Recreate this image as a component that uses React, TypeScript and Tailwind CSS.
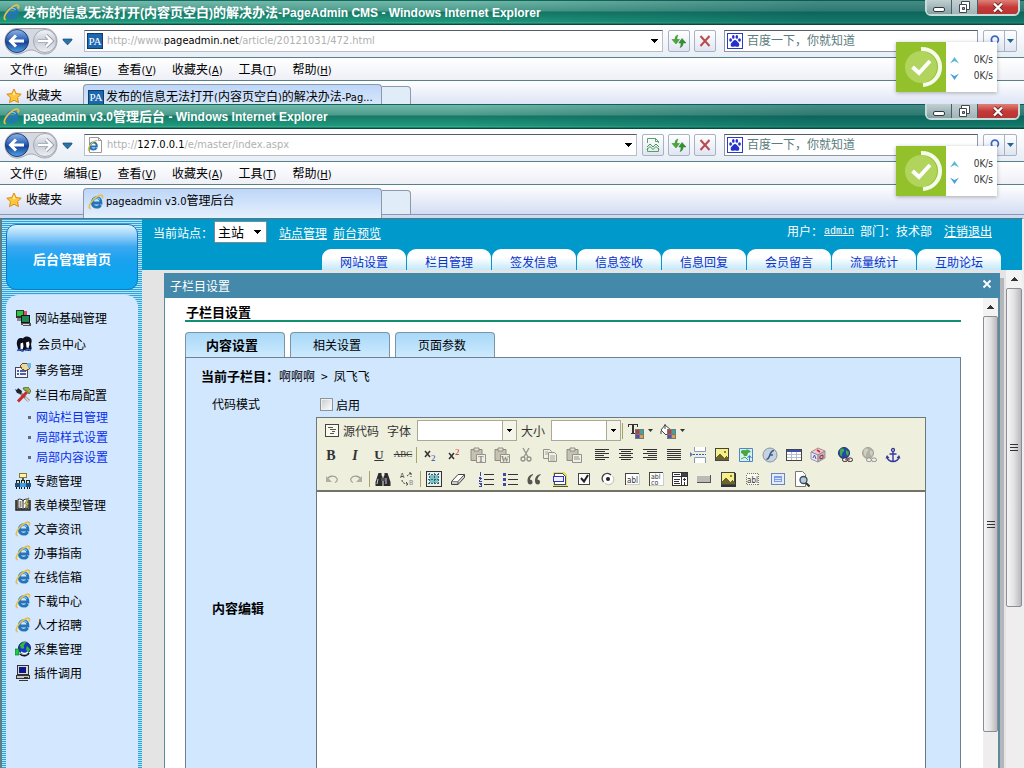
import type { ReactNode } from 'react';

const cjk = "font-['Noto_Sans_CJK_SC',sans-serif]";
const ui = "font-['DejaVu_Sans_Condensed','Noto_Sans_CJK_SC',sans-serif]";

// Chinese runs are set one size larger than the Latin text around them
function Mixed({ text, className }: { text: string; className: string }) {
  return (
    <>
      {text.split(/([\u4e00-\u9fff]+)/).map((part, i) =>
        i % 2 ? <span key={i} className={className}>{part}</span> : part
      )}
    </>
  );
}

function Icon({ children, size = 16, crisp = false }: { children: ReactNode; size?: number; crisp?: boolean }) {
  return (
    <svg width={size} height={size} viewBox="0 0 16 16" fill="none" shapeRendering={crisp ? 'crispEdges' : 'auto'} className="shrink-0" aria-hidden="true">
      {children}
    </svg>
  );
}

function IeIcon({ size = 16 }: { size?: number }) {
  return (
    <Icon size={size}>
      <path d="M4.600 9h8.400c.2-3.400-1.700-5.300-4.200-5.300-2.700 0-4.600 2.100-4.600 4.900s1.900 4.600 4.600 4.600c1.800 0 3.100-.8 3.800-2.200" stroke="#2474b8" strokeWidth="2.800" />
      <path d="M5 5.800c1.400-2.300 5-2.600 7-.3" stroke="#7cc8ee" strokeWidth="1.200" />
      <path d="M2.600 14.800C-.2 14 1.800 9.400 5 6 8.300 2.400 12.800.2 14.200 1.600c.6.600.4 1.800-.2 2.800" stroke="#e8bf4c" strokeWidth="1.600" />
    </Icon>
  );
}

function PaIcon() {
  return (
    <span className="flex size-4 shrink-0 items-center justify-center border border-[#123c6c] bg-[#1c68b0] font-['Liberation_Serif',serif] text-[11px] leading-none text-white">PA</span>
  );
}

function PageIcon() {
  return (
    <Icon>
      <path d="M2.500.5h9l3 3v12h-12z" fill="#fff" stroke="#999" />
      <path d="M11.500.5v3h3" stroke="#999" />
      <path d="M3 9.500h6.800c.1-2.500-1.200-3.900-3.200-3.900-2.100 0-3.400 1.500-3.400 3.600s1.300 3.400 3.400 3.400c1.400 0 2.300-.6 2.900-1.600" stroke="#2474b8" strokeWidth="2" />
      <path d="M1.800 14C.4 13 2 9 4.300 6.600 6.700 4.200 9.600 3 10.400 4" stroke="#e8bb3c" strokeWidth="1.200" />
    </Icon>
  );
}

function StarIcon() {
  return (
    <Icon>
      <path d="M8 1l2.200 4.600 5 .6-3.700 3.400 1 5L8 12.200 3.500 14.600l1-5L.8 6.200l5-.6z" fill="#ffc83a" stroke="#d98a18" />
      <path d="M8 3l1.200 3.300L8 7.500 6.800 6.300z" fill="#fff0a8" />
    </Icon>
  );
}

function PawIcon() {
  return (
    <Icon crisp>
      <rect x=".5" y=".5" width="15" height="15" fill="#fff" stroke="#2a3cc0" />
      <g fill="#2431cc" shapeRendering="auto">
        <ellipse cx="3.600" cy="7" rx="1.400" ry="1.800" />
        <ellipse cx="6.300" cy="3.900" rx="1.300" ry="1.900" />
        <ellipse cx="9.800" cy="3.900" rx="1.300" ry="1.900" />
        <ellipse cx="12.500" cy="7" rx="1.400" ry="1.800" />
        <path d="M8 7c1.600 0 2 1.600 3.400 2.800 1.500 1.300 1.200 4-.8 4-1 0-1.500-.3-2.600-.3s-1.600.3-2.600.3c-2 0-2.300-2.700-.8-4C6 8.600 6.400 7 8 7z" />
      </g>
    </Icon>
  );
}

function DownArrow({ className = 'text-black' }: { className?: string }) {
  return (
    <svg width="7" height="4" viewBox="0 0 7 4" shapeRendering="crispEdges" className={`shrink-0 ${className}`} aria-hidden="true">
      <path d="M0 0h7v1h-1v1h-1v1h-1v1h-1v-1h-1v-1h-1v-1h-1z" fill="currentColor" />
    </svg>
  );
}

function WindowButtons() {
  return (
    <div className="flex h-4 w-[95px] shrink-0 self-start overflow-hidden rounded-b-md border-2 border-t-0 border-[#c6dcd8]">
      <button aria-label="最小化" className="flex w-[25px] items-center justify-center border-r border-[#45606a] bg-gradient-to-b from-[#c2d0d2] to-[#86a0a4]">
        <span className="mt-1 h-[5px] w-3 rounded-xs border border-[#30383c] bg-white" />
      </button>
      <button aria-label="还原" className="flex w-[26px] items-center justify-center border-r border-[#45606a] bg-gradient-to-b from-[#c2d0d2] to-[#a2b4b8]">
        <svg width="13" height="13" viewBox="0 0 13 13" fill="#fff" stroke="#404850" aria-hidden="true">
          <path d="M3.500.5h8v8h-8z" />
          <path d="M1.500 3.500h7v8h-7z" />
          <path d="M4.500 6.500h2v2h-2z" fill="#8aa" />
        </svg>
      </button>
      <button aria-label="关闭" className="flex flex-1 items-center justify-center bg-gradient-to-b from-[#dd8078] via-[#c53a38] to-[#b83434]">
        <svg width="12" height="11" viewBox="0 0 12 11" aria-hidden="true">
          <path d="M2 1.500l8 8M10 1.500l-8 8" stroke="#702828" strokeWidth="4" />
          <path d="M2 1.500l8 8M10 1.500l-8 8" stroke="#fff" strokeWidth="2.400" />
        </svg>
      </button>
    </div>
  );
}

function NavButtons() {
  return (
    <svg width="76" height="30" viewBox="0 0 76 30" fill="none" className="shrink-0" aria-hidden="true">
      <defs>
        <linearGradient id="back" x2="0" y2="1">
          <stop stopColor="#8fb6e4" />
          <stop offset=".45" stopColor="#2c62b8" />
          <stop offset=".55" stopColor="#173f96" />
          <stop offset="1" stopColor="#4fa8e8" />
        </linearGradient>
        <linearGradient id="forward" x2="0" y2="1">
          <stop stopColor="#f4f6f8" />
          <stop offset=".5" stopColor="#c6ccd6" />
          <stop offset="1" stopColor="#eef1f5" />
        </linearGradient>
      </defs>
      <path d="M17 2.500h28c7 0 12 6 12 12.500S52 28 45 28s-8-4-14-4-7 4-14 4S5 22 5 15 10 2.500 17 2.500z" fill="#d4d8e0" stroke="#b0a6b0" />
      <circle cx="17" cy="15" r="11.500" fill="url(#back)" stroke="#1d3f7c" />
      <path d="M10 15h14M16 9.500L10.500 15l5.500 5.500" stroke="#fff" strokeWidth="3" />
      <circle cx="45" cy="15" r="11.500" fill="url(#forward)" stroke="#a2a8b4" />
      <path d="M38 15h14M46 9.500l5.500 5.500-5.500 5.500" stroke="#8f97a6" strokeWidth="4" />
      <path d="M38 15h14M46 9.500l5.500 5.500-5.500 5.500" stroke="#fff" strokeWidth="2.400" />
      <path d="M63 13h9v1l-4 4.500h-1L63 14z" fill="#2a72a4" stroke="#174c78" strokeWidth=".7" />
    </svg>
  );
}

function ToolButton({ label, children }: { label: string; children: ReactNode }) {
  return (
    <button aria-label={label} className="flex size-[22px] shrink-0 items-center justify-center rounded-xs border border-[#a9b2bf] bg-gradient-to-b from-white to-[#dfe5f2]">
      {children}
    </button>
  );
}

// Floating download-manager badge
function SpeedWidget() {
  return (
    <div className="absolute top-[42px] right-[27px] z-10 flex h-[50px] w-[101px] bg-white shadow-[0_1px_4px_rgba(0,0,0,0.300)]">
      <svg width="50" height="50" viewBox="0 0 50 50" fill="none" className="shrink-0 bg-[#92c12c]" aria-hidden="true">
        <circle cx="25" cy="25" r="16" fill="#b0d45c" />
        <path d="M25 7a18 18 0 0 1 2 36" stroke="#f6faea" strokeWidth="4" />
        <path d="M16.500 25l6.500 6L34 19" stroke="#fff" strokeWidth="4" />
      </svg>
      <div className="flex flex-1 flex-col justify-center pt-[2px] pr-1 pl-1 font-['DejaVu_Sans_Condensed',sans-serif] text-[10px] leading-4 text-[#333]">
        <div className="flex items-center justify-between">
          <svg width="9" height="7" viewBox="0 0 9 7" aria-hidden="true"><path d="M0 6.500L4.500 0 9 6.500 4.500 4z" fill="#58b8dc" /></svg>
          <span>0K/s</span>
        </div>
        <div className="flex items-center justify-between">
          <svg width="9" height="7" viewBox="0 0 9 7" aria-hidden="true"><path d="M0 .5L4.500 7 9 .5 4.500 3z" fill="#4aa4dc" /></svg>
          <span>0K/s</span>
        </div>
      </div>
    </div>
  );
}

const menus = [
  ['文件', 'F'],
  ['编辑', 'E'],
  ['查看', 'V'],
  ['收藏夹', 'A'],
  ['工具', 'T'],
  ['帮助', 'H'],
];

type BrowserProps = {
  title: string;
  url: [string, string, string];
  tab: string;
  urlIcon: ReactNode;
  tabIcon: ReactNode;
  compat?: boolean;
};

function BrowserChrome({ title, url, tab, urlIcon, tabIcon, compat }: BrowserProps) {
  return (
    <div className={`relative ${ui} text-[12px] text-black`}>
      <div className="flex h-[25px] items-center bg-[linear-gradient(to_right,transparent_45%,rgba(0,70,75,0.400)_80%),linear-gradient(#0d6a58_0_1px,#74b8aa_1px,#4a9c8c_11px,#177866_12px,#1f9a7e_22px,#3db494_23px,#0b4a3a_24px)] pr-1 pl-[3px]">
        <IeIcon size={17} />
        <h1 className="ml-[3px] min-w-0 flex-1 truncate font-['Liberation_Sans','Noto_Sans_CJK_SC',sans-serif] text-[12px] leading-5 font-bold text-white">
          <Mixed text={title} className="text-[13px]" />
        </h1>
        <WindowButtons />
      </div>

      <div className="flex h-8 items-center bg-gradient-to-b from-white to-[#e8eef6] pr-[7px] pl-0">
        <NavButtons />
        <div className="ml-2 flex h-[22px] min-w-0 flex-1 items-center border border-[#b8bec8] border-t-[#555c64] bg-white pr-1 pl-[2px]">
          {urlIcon}
          <div role="textbox" aria-label="地址" className="ml-1 min-w-0 flex-1 truncate text-[11px] text-[#b0b0b0]">
            {url[0]}<span className="text-black">{url[1]}</span>{url[2]}
          </div>
          <DownArrow />
        </div>
        <div className="ml-[5px] flex gap-1">
          {compat && (
            <ToolButton label="兼容性视图">
              <Icon>
                <path d="M2.500 6V1.500h8l3 3V6M2.500 11v3.500h11V11M10.500 1.500v3h3" stroke="#5aa060" />
                <path d="M2 10l3-3 3 3 3-3 3 3M2 12.500l3-3 3 3 3-3 3 3" stroke="#4a9452" />
              </Icon>
            </ToolButton>
          )}
          <ToolButton label="刷新">
            <Icon>
              <path d="M7 2C4.500 2.500 4 4.500 4 6.500H1L5 11l3.500-4.500H6C6 5 6 3.500 7 2z" fill="#4aa83a" stroke="#2f7f24" strokeWidth=".5" />
              <path d="M9 14.500c2.500-.5 3-2.500 3-4.500h3l-4-4.500L7.800 10H10c0 1.500 0 3-1 4.500z" fill="#2f9430" stroke="#24701c" strokeWidth=".5" />
            </Icon>
          </ToolButton>
          <ToolButton label="停止">
            <Icon><path d="M3.500 3l9 10M12.500 3l-9 10" stroke="#b84c4c" strokeWidth="2" /></Icon>
          </ToolButton>
        </div>
        <div className="ml-2 flex h-[22px] w-[254px] items-center border border-[#8f98a4] border-t-[#555c64] bg-white pl-[2px]">
          <PawIcon />
          <input aria-label="搜索" placeholder="百度一下，你就知道" className="ml-1 h-4 min-w-0 flex-1 bg-transparent text-[12px] outline-none placeholder:text-[#5a7c80]" />
        </div>
        <div className="ml-[5px] flex h-[22px] w-[34px] rounded-xs border border-[#a9b2bf] bg-gradient-to-b from-white to-[#dfe5f2]">
          <button aria-label="搜索" className="flex w-[21px] items-center justify-center border-r border-[#a9b2bf]">
            <Icon size={14}>
              <circle cx="9" cy="6.500" r="4" stroke="#3a68c4" strokeWidth="2" />
              <path d="M6 10l-4 4" stroke="#3a68c4" strokeWidth="2.400" />
            </Icon>
          </button>
          <button aria-label="搜索选项" className="flex flex-1 items-center justify-center">
            <svg width="7" height="4" viewBox="0 0 7 4" aria-hidden="true"><path d="M0 0h7L3.500 4z" fill="#246494" /></svg>
          </button>
        </div>
      </div>

      <nav className="flex h-6 items-center gap-4 border-y border-[#58808a] bg-gradient-to-b from-white to-[#eef0f7] pt-[2px] pl-[10px]">
        {menus.map(([name, key]) => (
          <button key={key} className="whitespace-nowrap">
            {name}<span className="text-[11px]">(<u>{key}</u>)</span>
          </button>
        ))}
      </nav>

      <div className="flex h-[33px] bg-gradient-to-b from-white to-[#cdd8f0]">
        <button className="flex h-[30px] w-[83px] items-center gap-1 border-b border-[#8c98ac] pl-[6px]">
          <StarIcon />
          收藏夹
        </button>
        <div className="mt-[3px] flex h-[30px] w-[299px] items-center gap-[2px] rounded-t border border-b-0 border-[#8c98ac] bg-gradient-to-b from-[#bdd6f8] to-[#e6f0fc] pb-1 pl-1 text-[11px] leading-5">
          {tabIcon}
          <span className="truncate"><Mixed text={tab} className="text-[12px]" /></span>
        </div>
        <div className="mt-[5px] h-[25px] w-[29px] rounded-tr border border-l-0 border-[#8c98ac] bg-[#e0ecf8]" />
        <div className="h-[30px] flex-1 border-b border-[#8c98ac]" />
      </div>
      <SpeedWidget />
    </div>
  );
}

/* ---------- sidebar ---------- */

const sideIcons = {
  network: (
    <Icon crisp>
      <path d="M1 0h8v8h-8z" fill="#333" /><path d="M2 1h6v5h-6z" fill="#28c840" />
      <path d="M9 1h3v5h-3z" fill="#e04870" />
      <path d="M6 5h9v8h-9z" fill="#112" /><path d="M7 6h7v6h-7z" fill="#1b8b50" />
      <path d="M2 8h4v3h-4z" fill="#888" /><path d="M6 13h10v3h-8v-1h-2z" fill="#555" /><path d="M8 14h6v1h-6z" fill="#ddd" />
    </Icon>
  ),
  members: (
    <Icon>
      <path d="M1 9C0 4 3 1 7 2.500 9-.5 14 0 15.300 3c.7 2 .2 4-.3 5l.7 5-2.700 2-4-1-3 1.500-3.500-1z" fill="#0c0e1c" />
      <path d="M4.500 7.500l2.500-1 .5 4-1 3-2-.5zM10 6.500l3-1 .5 3-1 3.500-2-.5z" fill="#fff" />
      <path d="M1 14.500l3.500-1 3 2M9 14.500l3-1.500 3 1.500" stroke="#3458d0" strokeWidth="1.500" />
    </Icon>
  ),
  affairs: (
    <Icon crisp>
      <path d="M.5 5.500h12v10h-12z" fill="#f4f4ff" stroke="#445" />
      <path d="M2 9h2M2 12h2M5 9h6M5 12h6" stroke="#4860b0" strokeWidth="1.200" />
      <path d="M5 4l3-3 4 1 2 1v4l-3 2-4-2z" fill="#ecd898" stroke="#6a5020" />
      <path d="M12 1h4v5h-3z" fill="#6cb8e0" />
    </Icon>
  ),
  tools: (
    <Icon>
      <path d="M3 4l11 10" stroke="#888" strokeWidth="3" />
      <path d="M0 2l2 4 4 1 1-3-4-3-1 2z" fill="#1c2428" />
      <path d="M12 5L3 14.500" stroke="#c82c24" strokeWidth="3" />
      <path d="M8 1l5-1 3 4-2 3-2-3-3-1z" fill="#9cae48" stroke="#506020" strokeWidth=".8" />
      <path d="M10.500 10.500l3.500 4" stroke="#ddd" strokeWidth="1.500" />
    </Icon>
  ),
  topic: (
    <Icon crisp>
      <path d="M4.500.5h7v4h-7z" fill="#fff4a0" stroke="#8a7a30" />
      <path d="M7 5h2v2h-2z" fill="#555" />
      <path d="M1 7h4v3h-4zM6 7h4v3h-4zM11 7h4v3h-4z" fill="#123" />
      <path d="M2 8h2v2h-2zM7 8h2v2h-2zM12 8h2v2h-2z" fill="#fd8" />
      <path d="M0 10h5v4h-5zM11 10h5v4h-5z" fill="#1c5088" /><path d="M5 10h6v4h-6z" fill="#38a0e8" />
      <path d="M1 14h1v2h-1zM4 14h1v2h-1zM6 14h1v2h-1zM9 14h1v2h-1zM12 14h1v2h-1zM14 14h1v2h-1z" fill="#111" />
    </Icon>
  ),
  book: (
    <Icon>
      <path d="M1 3v10h14V3" fill="#99907a" stroke="#222" strokeWidth="1.500" />
      <path d="M3 2.500c2-1 4 0 5 1 1-1 3-2 5-1v9c-2-1-4 0-5 1-1-1-3-2-5-1z" fill="#fff" stroke="#222" />
      <path d="M8 3v9M4.500 5h2M4.500 7h2M4.500 9h2" stroke="#222" />
      <path d="M13 1L9.500 7h2L10 12l4-6h-2l2-5z" fill="#e8e030" stroke="#554" strokeWidth=".6" />
    </Icon>
  ),
  ie: <IeIcon />,
  globe: (
    <Icon>
      <circle cx="9.500" cy="7" r="6" fill="#1838c8" stroke="#083060" />
      <path d="M5 4c2-3 6-4 6-3s-3 3-2 5-4 3-4-2zM12 5l3 3-2 4-2-4z" fill="#38b838" />
      <path d="M5 13c3 3 8 2 9-1" stroke="#111" strokeWidth="1.500" />
      <path d="M6 11c2 2 5 2 7 0" stroke="#fff" strokeWidth="1.500" />
      <path d="M0 8h4v6H0z" fill="#18d038" stroke="#0a6028" strokeWidth=".6" />
    </Icon>
  ),
  computer: (
    <Icon crisp>
      <path d="M2.500.5h11v9h-11z" fill="#d8d8d0" stroke="#333" />
      <path d="M4 2h7v6h-7z" fill="#0a1890" />
      <path d="M1.500 10.500h13v3h-13z" fill="#c8c8c0" stroke="#333" />
      <path d="M9 12h4M4 15h9" stroke="#333" />
    </Icon>
  ),
};

type SideItem = { label: string; icon: keyof typeof sideIcons; children?: string[] };

const topItems: SideItem[] = [
  { label: '网站基础管理', icon: 'network' },
  { label: '会员中心', icon: 'members' },
  { label: '事务管理', icon: 'affairs' },
  { label: '栏目布局配置', icon: 'tools', children: ['网站栏目管理', '局部样式设置', '局部内容设置'] },
];

const otherItems: SideItem[] = [
  { label: '专题管理', icon: 'topic' },
  { label: '表单模型管理', icon: 'book' },
  { label: '文章资讯', icon: 'ie' },
  { label: '办事指南', icon: 'ie' },
  { label: '在线信箱', icon: 'ie' },
  { label: '下载中心', icon: 'ie' },
  { label: '人才招聘', icon: 'ie' },
  { label: '采集管理', icon: 'globe' },
  { label: '插件调用', icon: 'computer' },
];

function Sidebar() {
  return (
    <aside className="flex w-[142px] shrink-0 flex-col border-l-2 border-[#5f7f84] bg-[repeating-linear-gradient(#2fa4dc_0_1px,#b4e4fa_1px_2px)] pr-1 pl-1">
      <a href="#" className="mt-[5px] mb-[5px] flex h-[66px] shrink-0 items-center justify-center rounded-[10px] border border-[#1478c0] bg-[linear-gradient(#e2f4fe_0,#8cccf8_12px,#3ca8f2_22px,#18a2ee_36px,#08a8f0_100%)] pt-1 text-[13px] font-bold text-white">
        后台管理首页
      </a>
      <nav className="flex-1 rounded-t-xl bg-[#d3e7fe] pt-[10px] pl-[9px] text-[12px]">
        <ul>
          {topItems.map((item) => (
            <li key={item.label}>
              <a href="#" className={`flex items-center ${item.children ? 'h-6' : 'h-[26px]'} ${item.icon === 'members' ? 'gap-[6px] pl-px' : 'gap-1'}`}>
                {sideIcons[item.icon]}
                <span>{item.label}</span>
              </a>
              {item.children && (
                <ul className="pb-[2px]">
                  {item.children.map((child) => (
                    <li key={child} className="flex h-5 items-center gap-[5px] pl-[13px] text-[#0a30ee]">
                      <span className="size-[3px] bg-[#667]" />
                      <a href="#">{child}</a>
                    </li>
                  ))}
                </ul>
              )}
            </li>
          ))}
          {otherItems.map((item) => (
            <li key={item.label}>
              <a href="#" className="flex h-6 items-center gap-[3px]">
                {sideIcons[item.icon]}
                <span>{item.label}</span>
              </a>
            </li>
          ))}
        </ul>
      </nav>
    </aside>
  );
}

/* ---------- page header ---------- */

const headerTabs = ['网站设置', '栏目管理', '签发信息', '信息签收', '信息回复', '会员留言', '流量统计', '互助论坛'];

function Header() {
  return (
    <header className="flex h-[51px] shrink-0 flex-col justify-between bg-[#0099cc] text-[12px] text-white">
      <div className="flex items-center pr-[30px] pl-[11px] leading-5">
        <label htmlFor="site" className="mt-1">当前站点：</label>
        <div className="relative mt-px ml-[1px]">
          <select id="site" className="h-[22px] w-[53px] appearance-none border border-[#7a8a94] bg-white pl-[3px] text-[13px] leading-5 text-black">
            <option>主站</option>
          </select>
          <span className="pointer-events-none absolute top-[9px] right-[6px]"><DownArrow /></span>
        </div>
        <a href="#" className="mt-1 ml-3 underline">站点管理</a>
        <a href="#" className="mt-1 ml-[6px] underline">前台预览</a>
        <span className="ml-auto whitespace-pre">用户：</span>
        <a href="#" className="mr-[6px] ml-px pt-[2px] font-['Liberation_Mono',monospace] text-[10px] underline">admin</a>
        <span>部门：技术部</span>
        <a href="#" className="ml-3 underline">注销退出</a>
      </div>
      <nav className="flex justify-end gap-px pr-[21px]">
        {headerTabs.map((tab) => (
          <a key={tab} href="#" className="flex h-[21px] w-[84px] items-center justify-center rounded-t-[9px] bg-gradient-to-b from-white from-40% to-[#c4e8fa] pt-1 text-[#0b2fc8]">
            {tab}
          </a>
        ))}
      </nav>
    </header>
  );
}

/* ---------- scroll bars ---------- */

function ScrollBar({ thumb }: { thumb: 'inner' | 'outer' }) {
  return (
    <div className={`flex shrink-0 flex-col bg-[#efedee] ${thumb === 'inner' ? 'w-[15px]' : 'w-4'}`} aria-hidden="true">
      <div className="flex h-[18px] shrink-0 items-center justify-center bg-[#f3f3f3]">
        <svg width="7" height="4" viewBox="0 0 7 4" shapeRendering="crispEdges"><path d="M3 0h1v1h1v1h1v1h1v1H0V3h1V2h1V1h1z" fill="#333" /></svg>
      </div>
      <div
        className={`flex shrink-0 flex-col items-center justify-center gap-[2px] rounded-xs border border-[#8c8c92] bg-gradient-to-r from-[#f6f6f6] via-[#e2e2e4] to-[#b8b8be] ${
          thumb === 'inner' ? 'h-[416px]' : 'h-[319px]'
        }`}
      >
        <span className="h-px w-2 bg-[#333]" />
        <span className="h-px w-2 bg-[#333]" />
        <span className="h-px w-2 bg-[#333]" />
      </div>
    </div>
  );
}

/* ---------- editor ---------- */

function Tool({ label, children }: { label: string; children: ReactNode }) {
  return (
    <button title={label} aria-label={label} className="flex h-6 w-6 shrink-0 items-center justify-center">
      {children}
    </button>
  );
}

function Separator() {
  return <span className="mx-px h-4 w-px shrink-0 bg-[#a8a468]" />;
}

function Lines({ rows }: { rows: [number, number][] }) {
  return (
    <Icon crisp>
      {rows.map(([x, w], i) => (
        <rect key={i} x={x} y={2 + i * 2} width={w} height="1" fill="#333" />
      ))}
    </Icon>
  );
}

const small = "fill-[#333] font-['DejaVu_Sans_Condensed',sans-serif]";

function PasteIcon({ mark }: { mark?: string }) {
  return (
    <Icon>
      <path d="M1 2.500h11v11H1z" fill="#c4c2b2" stroke="#8e8c80" />
      <path d="M4 1h5v3H4z" fill="#e6e4d6" stroke="#8e8c80" />
      <path d="M6.500 7.500h9v8h-9z" fill="#f1f0e4" stroke="#94928a" />
      {mark ? (
        <text x="11" y="14.500" textAnchor="middle" fontSize="8" fontWeight="bold" fill="#8a887c">{mark}</text>
      ) : (
        <path d="M8 10h5M8 12h6" stroke="#94928a" />
      )}
    </Icon>
  );
}

function Palette() {
  return (
    <>
      <path d="M7 6h9v10H7z" fill="#777" />
      <path d="M8 7h3v4H8z" fill="#b04444" /><path d="M12 7h3v4h-3z" fill="#3aa4a0" />
      <path d="M8 12h3v3H8z" fill="#5a4cb8" /><path d="M12 12h3v3h-3z" fill="#d8a04c" />
    </>
  );
}

function PictureIcon({ raised = false }: { raised?: boolean }) {
  return (
    <Icon crisp>
      <path d="M1.500 1.500h13v12h-13z" fill="#f6f088" stroke="#444" />
      <circle cx="11" cy="5" r="1.500" fill="#a08020" />
      <path d="M2 13v-2l4-5 4 5 2-2 3 3v1z" fill="#6a6430" />
      {raised && <path d="M1 15h14.500V2" stroke="#333" strokeWidth="2" />}
    </Icon>
  );
}

function EditorToolbar() {
  return (
    <div className="h-[74px] border-b-2 border-[#74736a] bg-[#efefde] pl-[2px] text-[#333]">
      <div className="flex h-[25px] items-center text-[12px]">
        <button className="ml-[6px] flex items-center gap-1 leading-5">
          <svg width="14" height="13" viewBox="0 0 14 13" shapeRendering="crispEdges" aria-hidden="true">
            <path d="M.5.5h13v12H.5z" fill="#faf9ee" stroke="#444" />
            <path d="M3 3.500h5M5 5.500h6M7 7.500h3M5 9.500h4" stroke="#555" />
          </svg>
          源代码
        </button>
        <label htmlFor="font" className="ml-2">字体</label>
        <div className="relative ml-[6px]">
          <select id="font" className="block h-[21px] w-[100px] appearance-none border border-[#aaa998] bg-white" />
          <span className="pointer-events-none absolute top-px right-px flex h-[19px] w-[14px] items-center justify-center border-l border-[#aaa998] bg-[#f4f4e8]"><svg width="5" height="3" viewBox="0 0 5 3" shapeRendering="crispEdges" aria-hidden="true"><path d="M0 0h5v1H4v1H3v1H2V2H1V1H0z" /></svg></span>
        </div>
        <label htmlFor="size" className="ml-1">大小</label>
        <div className="relative ml-[6px]">
          <select id="size" className="block h-[21px] w-[70px] appearance-none border border-[#aaa998] bg-white" />
          <span className="pointer-events-none absolute top-px right-px flex h-[19px] w-[14px] items-center justify-center border-l border-[#aaa998] bg-[#f4f4e8]"><svg width="5" height="3" viewBox="0 0 5 3" shapeRendering="crispEdges" aria-hidden="true"><path d="M0 0h5v1H4v1H3v1H2V2H1V1H0z" /></svg></span>
        </div>
        <Separator />
        <button aria-label="文本颜色" className="ml-1 flex items-center gap-1">
          <Icon crisp><path d="M0 1h10v3H9V2H6v8h1v1H3v-1h1V2H1v2H0z" fill="#333" /><Palette /></Icon>
          <svg width="5" height="3" viewBox="0 0 5 3" aria-hidden="true"><path d="M0 0h5L2.500 3z" fill="#333" /></svg>
        </button>
        <button aria-label="背景颜色" className="ml-[7px] flex items-center gap-1">
          <Icon><path d="M5 2l6 5-5 5-5-5zM5 6V1M1 8v3" fill="#fff" stroke="#444" /><Palette /></Icon>
          <svg width="5" height="3" viewBox="0 0 5 3" aria-hidden="true"><path d="M0 0h5L2.500 3z" fill="#333" /></svg>
        </button>
      </div>

      <div className="flex h-6 items-center font-['Liberation_Serif',serif]">
        <Tool label="加粗"><b className="text-[14px]">B</b></Tool>
        <Tool label="倾斜"><b className="text-[14px] italic">I</b></Tool>
        <Tool label="下划线"><b className="text-[13px] underline">U</b></Tool>
        <Tool label="删除线"><span className="text-[9px] line-through">ABC</span></Tool>
        <Separator />
        <Tool label="下标">
          <Icon><path d="M3 4l5 6M8 4l-5 6" stroke="#333" strokeWidth="1.500" /><text x="9" y="14" fontSize="9" fill="#3344aa">2</text></Icon>
        </Tool>
        <Tool label="上标">
          <Icon><path d="M3 6l5 6M8 6l-5 6" stroke="#333" strokeWidth="1.500" /><text x="9" y="8" fontSize="9" fill="#c03030">2</text></Icon>
        </Tool>
        <Tool label="粘贴为文本"><PasteIcon mark="T" /></Tool>
        <Tool label="从 Word 粘贴"><PasteIcon mark="W" /></Tool>
        <Tool label="剪切">
          <Icon><path d="M5 1l5 9M11 1l-5 9" stroke="#94928a" strokeWidth="1.300" /><circle cx="5" cy="12" r="2" stroke="#94928a" strokeWidth="1.300" /><circle cx="11" cy="12" r="2" stroke="#94928a" strokeWidth="1.300" /></Icon>
        </Tool>
        <Tool label="复制">
          <Icon><path d="M1.500 2.500h6l2 2v7h-8z" fill="#f1f0e4" stroke="#94928a" /><path d="M6.500 5.500h6l2 2v7h-8z" fill="#f1f0e4" stroke="#94928a" /><path d="M8 9h5M8 11h5M8 13h5M3 5h3M3 7h3" stroke="#a8a698" /></Icon>
        </Tool>
        <Tool label="粘贴"><PasteIcon /></Tool>
        <span className="w-1" />
        <Tool label="左对齐"><Lines rows={[[1, 14], [1, 10], [1, 14], [1, 9], [1, 14], [1, 10]]} /></Tool>
        <Tool label="居中"><Lines rows={[[1, 14], [3, 10], [1, 14], [3, 10], [1, 14], [3, 10]]} /></Tool>
        <Tool label="右对齐"><Lines rows={[[1, 14], [5, 10], [1, 14], [6, 9], [1, 14], [5, 10]]} /></Tool>
        <Tool label="两端对齐"><Lines rows={[[1, 14], [1, 14], [1, 14], [1, 14], [1, 14], [1, 14]]} /></Tool>
        <Tool label="分页符">
          <Icon><path d="M4.500 0v4.500h11V0M4.500 16v-5.500h11V16" fill="#fff" stroke="#8898b8" /><path d="M3 7.500h13" stroke="#3858b0" strokeDasharray="2 1" /><path d="M0 5l3 2.500L0 10z" fill="#6078a8" /></Icon>
        </Tool>
        <Tool label="图像"><PictureIcon /></Tool>
        <Tool label="表情图">
          <Icon><path d="M1.500 1.500h13v13h-13z" fill="#d8f0f4" stroke="#4a88c8" /><path d="M3 4c2-2 4 0 5-1s4 0 5 2l-3 1-1 3H6L5 7 3 6z" fill="#48a840" /><path d="M3 12l4-2 3 3" stroke="#48a840" /><path d="M11.500 14V9M9.500 11l2-2.500 2 2.500" stroke="#3a78c8" /></Icon>
        </Tool>
        <Tool label="Flash">
          <Icon><circle cx="8" cy="8" r="7" fill="#c8d2de" stroke="#8494a8" /><path d="M12 3.500c-3 0-3.500 3-4.200 5S6 12 4.500 12.500M7 8h4" stroke="#3c608c" strokeWidth="1.700" /></Icon>
        </Tool>
        <Tool label="表格">
          <Icon crisp><path d="M.5 2.500h15v11H.5z" fill="#fff" stroke="#444" /><path d="M1 3h14v2H1z" fill="#3c50b0" /><path d="M1 7.500h14M1 10.500h14M5.500 5v8M10.500 5v8" stroke="#b8bccc" /></Icon>
        </Tool>
        <Tool label="特殊符号">
          <Icon><path d="M1 5l7-4 7 3-7 4z" fill="#f4c8cc" stroke="#8c8088" strokeWidth=".8" /><path d="M1 5l7 3v7l-7-3z" fill="#e8e8f4" stroke="#8c8088" strokeWidth=".8" /><path d="M15 4v7l-7 4V8z" fill="#c4b4bc" stroke="#8c8088" strokeWidth=".8" /><path d="M7 3l3 2" stroke="#c82838" strokeWidth="1.600" /><path d="M3 11l1.500-3L6 12" stroke="#4450c0" /><path d="M10 12V9l3-1v3z" stroke="#a03040" /></Icon>
        </Tool>
        <span className="w-[3px]" />
        <Tool label="超链接">
          <Icon><circle cx="7" cy="6" r="5.500" fill="#2848a8" stroke="#1c3468" /><path d="M3 3c2-3 5-1 4 1s-2 1-2 4-3 0-2-5zM9 3l3 2-1 4-2-2z" fill="#40a850" /><rect x="5.500" y="11" width="5" height="3.500" rx="1.700" fill="#eee" stroke="#333" /><rect x="10.500" y="11" width="5" height="3.500" rx="1.700" fill="#eee" stroke="#333" /><path d="M8 12.800h5" stroke="#a33" /></Icon>
        </Tool>
        <Tool label="取消超链接">
          <Icon><circle cx="7" cy="6" r="5.500" fill="#b4b2a6" stroke="#a3a196" /><path d="M3 3c2-3 5-1 4 1s-2 1-2 4-3 0-2-5zM9 3l3 2-1 4-2-2z" fill="#d0cec0" /><rect x="5.500" y="11" width="5" height="3.500" rx="1.700" fill="#eee" stroke="#94928a" /><rect x="10.500" y="11" width="5" height="3.500" rx="1.700" fill="#eee" stroke="#94928a" /></Icon>
        </Tool>
        <Tool label="锚点">
          <Icon><circle cx="8" cy="3" r="1.500" stroke="#3438a0" strokeWidth="1.300" /><path d="M8 5v10M4.500 7h7M2 9.500c0 3 3 5 6 5s6-2 6-5" stroke="#3438a0" strokeWidth="1.400" /><path d="M.5 11.500L2 8l2.500 3zM15.500 11.500L14 8l-2.500 3z" fill="#3438a0" /></Icon>
        </Tool>
      </div>

      <div className="flex h-6 items-center pl-px">
        <Tool label="撤消">
          <Icon><path d="M3 8.500C5 4.500 11 4 13 7.500c.8 2-.5 3.500-2 4" stroke="#a09e94" strokeWidth="1.200" /><path d="M2 5v6h6z" fill="#b0aea2" /></Icon>
        </Tool>
        <Tool label="重做">
          <Icon><path d="M13 8.500C11 4.500 5 4 3 7.500c-.8 2 .5 3.500 2 4" stroke="#a09e94" strokeWidth="1.200" /><path d="M14 5v6H8z" fill="#b0aea2" /></Icon>
        </Tool>
        <Separator />
        <Tool label="查找">
          <Icon><path d="M3.500 2h3v2l1 2v9H.5v-4zM9.500 2h3l3 9v4h-7V6l1-2z" fill="#2c2c30" /><path d="M6 7h4v3H6z" fill="#555" /><path d="M3 8l-1 5M11 7v6" stroke="#ccc" /></Icon>
        </Tool>
        <Tool label="替换">
          <Icon><text x="1" y="7" fontSize="7" className={small}>A</text><text x="10" y="14" fontSize="7" fill="#888" className="font-['DejaVu_Sans_Condensed',sans-serif]">B</text><path d="M8 5l4-3M12 2v4M12 2H9M3 9c0 3 3 4 6 4M7 11l2 2-2 2" stroke="#444" strokeDasharray="2 1" /></Icon>
        </Tool>
        <Separator />
        <Tool label="全选">
          <Icon crisp><path d="M.5.5h15v15H.5z" fill="#eee" stroke="#333" /><path d="M4 4h8v8H4z" fill="#7cc0c0" /><path d="M2 3.500h12M2 8.500h12M2 12.500h12M3.500 2v12M8.500 2v12M12.500 2v12" stroke="#286878" strokeDasharray="2 1" /></Icon>
        </Tool>
        <Tool label="清除格式">
          <Icon><path d="M1.500 10.500L8 3.500h6.500l-6.500 7z" fill="#fff" stroke="#444" /><path d="M1.500 10.500v3H8v-3M8 13.500l6.500-7v-3" fill="#ccc" stroke="#444" /></Icon>
        </Tool>
        <span className="w-1" />
        <Tool label="编号列表">
          <Icon crisp><path d="M6 3h10v1H6zM6 8h10v1H6zM6 13h10v1H6z" fill="#333" /><path d="M2 1h1v4H2zM1 6h2v1h1v1H3v1H2v1h2v1H1V9h1V8H1zM1 12h3v4H1v-1h2v-1H2v-1H1z" fill="#3848a8" /></Icon>
        </Tool>
        <Tool label="项目列表">
          <Icon crisp><path d="M6 3h10v1H6zM6 8h10v1H6zM6 13h10v1H6z" fill="#333" /><path d="M1 2h3v3H1zM1 7h3v3H1zM1 12h3v3H1z" fill="#4448a0" /></Icon>
        </Tool>
        <Tool label="块引用">
          <Icon><path d="M7 3C3 4 1.500 6.500 1.500 10c0 5 5.500 4 5 1C6.300 9 5 8.500 4 9c0-2 1-4 3-5zM14.500 3C10.500 4 9 6.500 9 10c0 5 5.500 4 5 1-.2-2-1.500-2.500-2.500-2 0-2 1-4 3-5z" fill="#55544e" /></Icon>
        </Tool>
        <span className="w-[2px]" />
        <Tool label="DIV 容器">
          <Icon crisp><path d="M1 1h11l3 3v11H1z" fill="#e8e050" /><path d="M2.500 2.500h8l3 3v8h-11z" fill="#fff" stroke="#3840a8" /><path d="M1 5.500h10v5H1z" fill="#eef" stroke="#2c34b8" /><path d="M1 15.500h15V5" stroke="#55551c" /></Icon>
        </Tool>
        <Tool label="复选框">
          <Icon crisp><path d="M2.500 2.500h11v11h-11z" fill="#fff" stroke="#444" /><path d="M5 7l3 3.500L12 4" stroke="#222" strokeWidth="2" shapeRendering="auto" /></Icon>
        </Tool>
        <Tool label="单选按钮">
          <Icon><circle cx="8" cy="8" r="5" fill="#fff" /><path d="M3.500 11A5 5 0 0 1 11 4" stroke="#444" strokeWidth="1.300" /><path d="M12.500 5A5 5 0 0 1 5 12" stroke="#c4c2b4" /><circle cx="8" cy="8" r="2" fill="#222" /></Icon>
        </Tool>
        <Tool label="单行文本">
          <Icon crisp><path d="M1 2h14v12H1z" fill="#fff" /><path d="M1.500 14V2.500H15" stroke="#444" /><path d="M2 13.500h13V3" stroke="#ccc" /><text x="3" y="12" fontSize="8" className={small}>abl</text></Icon>
        </Tool>
        <Tool label="多行文本">
          <Icon crisp><path d="M1 1h14v14H1z" fill="#fff" /><path d="M1.500 15V1.500H15" stroke="#444" /><path d="M2 14.500h13V2" stroke="#ccc" /><text x="3" y="8" fontSize="7" className={small}>abl</text><text x="3" y="14" fontSize="7" className={small}>co</text></Icon>
        </Tool>
        <Tool label="列表/菜单">
          <Icon crisp><path d="M.5 1.500h15v13H.5zM.5 5.500h15M9.500 1.500v13" fill="#fff" stroke="#333" /><path d="M2 3.500h6M2 8h6M2 10h5M2 12h6M11 3.500h3M12.500 7v3M11 8.500h3M12.500 11v3" stroke="#333" /><path d="M10 2h5v3h-5z" fill="#444" /></Icon>
        </Tool>
        <Tool label="按钮">
          <Icon crisp><path d="M1 4h14v8H1z" fill="#bbbab4" /><path d="M1 4.500h13" stroke="#eee" /><path d="M1 11.500h13.500V4" stroke="#55544e" /></Icon>
        </Tool>
        <Tool label="图像域"><PictureIcon raised /></Tool>
        <Tool label="隐藏域">
          <Icon crisp><path d="M2.500 2.500h12v11h-12z" stroke="#777" strokeDasharray="1 1" fill="#faf9ee" /><text x="3" y="12" fontSize="8" className={small}>abl</text></Icon>
        </Tool>
        <span className="w-[2px]" />
        <Tool label="全屏">
          <Icon crisp><path d="M1.500 2.500h13v11h-13z" fill="#e4ecfc" stroke="#6c84b8" /><path d="M4 5h8v6H4z" fill="#7c9ce8" /><path d="M5 7h6M5 9h6" stroke="#dbe6ff" /></Icon>
        </Tool>
        <Tool label="预览">
          <Icon><path d="M1.500.5h7l3 3v12h-10z" fill="#fff" stroke="#777" /><circle cx="9.500" cy="9" r="3.500" fill="#a8d0e0" stroke="#445" strokeWidth="1.300" /><path d="M12 12l3.500 3.500" stroke="#333" strokeWidth="2" /></Icon>
        </Tool>
      </div>
    </div>
  );
}

const formTabs = ['内容设置', '相关设置', '页面参数'];

function ColumnDialog() {
  return (
    <section role="dialog" aria-label="子栏目设置" className="mt-[3px] flex min-w-0 flex-1 flex-col">
      <div className="flex h-[25px] shrink-0 items-center justify-between bg-[#4488aa] pr-2 pl-[6px] text-[12px] text-white">
        <span>子栏目设置</span>
        <button aria-label="关闭" className="flex items-center pb-1">
          <svg width="10" height="10" viewBox="0 0 10 10" aria-hidden="true"><path d="M1.500 1.500l7 7M8.500 1.500l-7 7" stroke="#fff" strokeWidth="1.800" /></svg>
        </button>
      </div>
      <div className="flex min-h-0 flex-1 border-r-2 border-l border-[#5c8c9c] bg-white">
        <div className="min-w-0 flex-1 overflow-hidden pr-[22px] pl-5">
          <h2 className="mt-[5px] h-[19px] border-b-2 border-[#109070] pl-px text-[13px] leading-[18px] font-bold">子栏目设置</h2>
          <div role="tablist" className="mt-[10px] flex gap-[5px]">
            {formTabs.map((tab, i) => (
              <button
                key={tab}
                role="tab"
                aria-selected={i === 0}
                className={`h-[25px] w-[100px] rounded-t-sm border border-b-0 border-[#7c94a8] bg-gradient-to-b from-[#a8d8f8] to-[#cdeafe] pr-[6px] ${i === 0 ? 'text-[13px] font-bold' : 'text-[12px]'}`}
              >
                {tab}
              </button>
            ))}
          </div>
          <div className="border border-[#708090] bg-[#d0e7fe] pr-[34px] text-[12px]">
            <p className="mt-2 pl-[15px] leading-5">
              <b className="text-[13px]">当前子栏目：</b>啊啊啊<span className="mx-[6px]">&gt;</span>凤飞飞
            </p>
            <div className="mt-2 flex h-[23px] pl-[26px] leading-5">
              <span className="w-[108px]">代码模式</span>
              <label className="flex h-[21px] items-center gap-[3px]">
                <input type="checkbox" className="size-[13px] appearance-none border border-[#8e9498] bg-gradient-to-br from-[#c8ccd0] to-white outline outline-1 -outline-offset-2 outline-[#eef0f0]" />
                启用
              </label>
            </div>
            <div className="flex h-[382px] items-center pl-[26px]">
              <label htmlFor="content" className="w-[104px] shrink-0 text-[13px] font-bold">内容编辑</label>
              <div className="flex h-full min-w-0 flex-1 flex-col border border-[#6c7880] bg-white">
                <EditorToolbar />
                <textarea id="content" className="w-full flex-1 resize-none bg-white p-2 outline-none" />
              </div>
            </div>
          </div>
        </div>
        <ScrollBar thumb="inner" />
      </div>
    </section>
  );
}

export default function App() {
  return (
    <div className={`flex h-screen flex-col overflow-hidden bg-white ${cjk}`}>
      <div className="h-[104px] shrink-0 overflow-hidden">
        <BrowserChrome
          title="发布的信息无法打开(内容页空白)的解决办法-PageAdmin CMS - Windows Internet Explorer"
          url={['http://www.', 'pageadmin.net', '/article/20121031/472.html']}
          tab="发布的信息无法打开(内容页空白)的解决办法-Pag..."
          urlIcon={<PaIcon />}
          tabIcon={<PaIcon />}
        />
      </div>
      <div className="shrink-0">
        <BrowserChrome
          title="pageadmin v3.0管理后台 - Windows Internet Explorer"
          url={['http://', '127.0.0.1', '/e/master/index.aspx']}
          tab="pageadmin v3.0管理后台"
          urlIcon={<PageIcon />}
          tabIcon={<IeIcon />}
          compat
        />
      </div>
      <main className="flex min-h-0 flex-1 border-t border-r-2 border-t-[#5f7478] border-r-[#eceef0] bg-[#e4e4e4]">
        <Sidebar />
        <div className="flex min-w-0 flex-1 flex-col">
          <Header />
          <div className="flex min-h-0 flex-1 overflow-hidden pl-[22px]">
            <ColumnDialog />
            <div className="mt-2 mr-[2px] w-1 shrink-0 bg-[#b4b6bc]" />
            <ScrollBar thumb="outer" />
          </div>
        </div>
      </main>
    </div>
  );
}
